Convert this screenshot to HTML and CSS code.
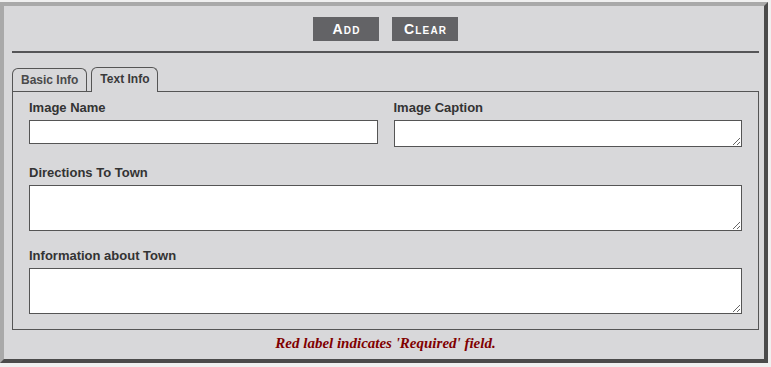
FILE: index.html
```html
<!DOCTYPE html>
<html>
<head>
<meta charset="utf-8">
<link rel="stylesheet" href="styles.css">
</head>
<body>
<div class="frame">
  <div class="toolbar">
    <button class="btn" type="button">Add</button>
    <button class="btn" type="button">Clear</button>
  </div>
  <div class="rule"></div>
  <div class="tabs">
    <div class="tab">Basic Info</div>
    <div class="tab active">Text Info</div>
  </div>
  <div class="panel">
    <div class="row two">
      <div class="field">
        <label class="label">Image Name</label>
        <input class="input" type="text">
      </div>
      <div class="field">
        <label class="label">Image Caption</label>
        <textarea class="area small"></textarea>
      </div>
    </div>
    <div class="row">
      <div class="field">
        <label class="label">Directions To Town</label>
        <textarea class="area big"></textarea>
      </div>
    </div>
    <div class="row last">
      <div class="field">
        <label class="label">Information about Town</label>
        <textarea class="area big"></textarea>
      </div>
    </div>
  </div>
  <div class="note">Red label indicates 'Required' field.</div>
</div>
</body>
</html>
```
FILE: styles.css
```css
html, body {
  margin: 0;
  padding: 0;
  background: #f0f0f0;
}
.frame {
  box-sizing: border-box;
  width: 768px;
  height: 361px;
  margin-top: 2px;
  border: 4px solid;
  border-color: #a9a9a9 #4b4b4b #4b4b4b #a9a9a9;
  background: #d8d8da;
  padding: 0 5px 0 8px;
  font-family: "Liberation Sans", Arial, sans-serif;
}
.toolbar {
  display: flex;
  justify-content: center;
  gap: 13px;
  padding-top: 11px;
}
.btn {
  box-sizing: border-box;
  width: 66px;
  height: 24px;
  border: none;
  margin: 0;
  padding: 0;
  background: #636366;
  color: #ffffff;
  font-family: "Liberation Sans", Arial, sans-serif;
  font-weight: bold;
  font-size: 14px;
  font-variant: small-caps;
  letter-spacing: 1.2px;
  text-indent: 1.2px;
}
.rule {
  height: 2px;
  background: #555557;
  margin-top: 10px;
}
.tabs {
  display: flex;
  align-items: flex-end;
  gap: 4px;
  margin-top: 14px;
}
.tab {
  box-sizing: border-box;
  height: 23px;
  padding: 0 8px;
  border: 1px solid #555;
  border-bottom: none;
  border-radius: 6px 6px 0 0;
  font-size: 12px;
  font-weight: bold;
  line-height: 22px;
  color: #4a4a4a;
  background: #d8d8da;
}
.tab.active {
  height: 25px;
  margin-bottom: -1px;
  line-height: 23px;
  color: #3a3a3a;
  position: relative;
  z-index: 1;
}
.panel {
  border: 1px solid #555;
  padding: 8px 16px 15px;
}
.row + .row {
  margin-top: 18px;
}
.row.last {
  margin-top: 17px;
}
.two {
  display: grid;
  grid-template-columns: 1fr 1fr;
  column-gap: 16px;
  align-items: start;
}
.field {
  display: flex;
  flex-direction: column;
}
.label {
  font-size: 13px;
  font-weight: bold;
  line-height: 15px;
  color: #333;
  margin-bottom: 5px;
}
.input, .area {
  box-sizing: border-box;
  display: block;
  width: 100%;
  margin: 0;
  border: 1px solid #555;
  background: #fff;
  padding: 2px;
  font-family: "Liberation Sans", Arial, sans-serif;
  font-size: 13px;
}
.input {
  height: 24px;
}
.area.small {
  height: 27px;
}
.area.big {
  height: 46px;
}
.note {
  text-align: center;
  padding-top: 5px;
  font-family: "Liberation Serif", "Times New Roman", serif;
  font-style: italic;
  font-weight: bold;
  font-size: 15px;
  line-height: 17px;
  color: #800000;
}
```
